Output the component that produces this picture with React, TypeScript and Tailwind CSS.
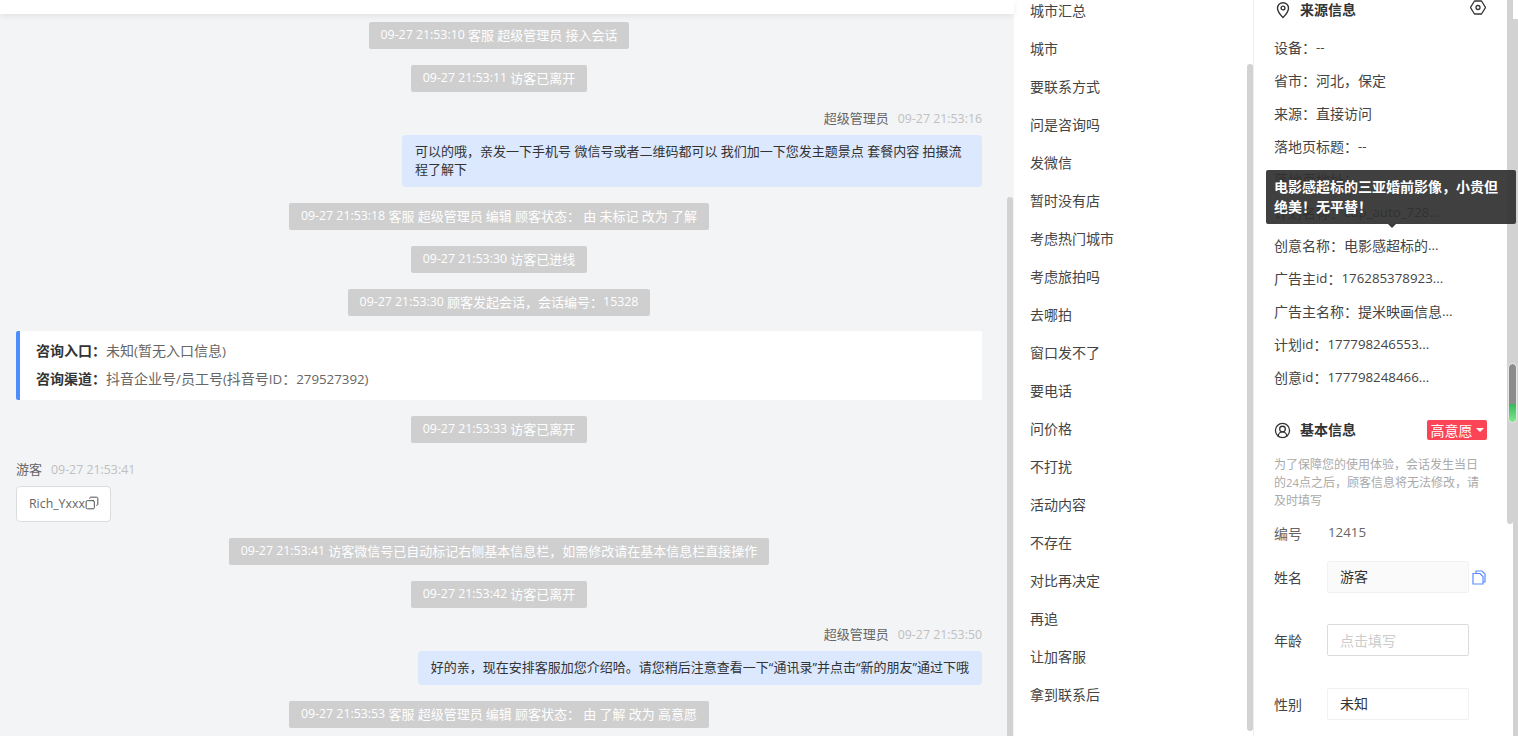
import { Copy, UserCircle2 } from "lucide-react";

const cjk = "font-['Open_Sans','Noto_Sans_CJK_SC',sans-serif]";

// latin runs sit a bit smaller than the CJK around them
function T({ text }: { text: string }) {
  return (
    <>
      {text.split(/([\x00-\x7f]+)/).map((part, i) =>
        i % 2 === 1 ? (
          <span key={i} className="text-[0.95em]">{part}</span>
        ) : (
          part
        )
      )}
    </>
  );
}

function Sys({ text }: { text: string }) {
  return (
    <div className="mb-[16px] flex justify-center">
      <div className="flex h-[27px] items-center whitespace-pre rounded-[2px] bg-[#cfcfcf] px-[12px] text-[13px] text-white">
        <T text={text} />
      </div>
    </div>
  );
}

function Sender({ name, time, right }: { name: string; time: string; right?: boolean }) {
  return (
    <div className={`mb-[7px] flex h-[20px] items-center gap-[9px] pt-[1px] text-[13px] ${right ? "justify-end" : ""}`}>
      <span className="text-[#666666]">{name}</span>
      <span className="text-[#c0c0c0]"><T text={time} /></span>
    </div>
  );
}

const phrases = [
  "城市", "要联系方式", "问是咨询吗", "发微信", "暂时没有店", "考虑热门城市", "考虑旅拍吗", "去哪拍", "窗口发不了",
  "要电话", "问价格", "不打扰", "活动内容", "不存在", "对比再决定", "再追", "让加客服", "拿到联系后",
];

const sourceRows = [
  "设备：--", "省市：河北，保定", "来源：直接访问", "落地页标题：--", "落地页地址：", "计划名称：cdp_auto_728...",
  "创意名称：电影感超标的...", "广告主id：176285378923...", "广告主名称：提米映画信息...", "计划id：177798246553...", "创意id：177798248466...",
];

export default function App() {
  return (
    <div className={`relative flex h-[736px] w-[1518px] overflow-hidden bg-white ${cjk}`}>
      {/* chat */}
      <div className="flex w-[1014px] shrink-0 flex-col bg-[#f3f4f6]">
        <div className="h-[14px] shrink-0 bg-white shadow-[0_2px_6px_rgba(0,0,0,0.08)]" />
        <div className="flex min-h-0 flex-1">
          <div className="w-[1007px] shrink-0 pl-[16px] pr-[25px] pt-[8px]">
            <Sys text="09-27 21:53:10 客服 超级管理员 接入会话" />
            <Sys text="09-27 21:53:11 访客已离开" />
            <Sender name="超级管理员" time="09-27 21:53:16" right />
            <div className="mb-[16px] flex justify-end">
              <div className="w-[580px] rounded-[4px] bg-[#dbe8fe] px-[13px] pb-[9px] pt-[7px] text-[13px] leading-[18px] text-[#333333]">
                可以的哦，亲发一下手机号 微信号或者二维码都可以 我们加一下您发主题景点 套餐内容 拍摄流程了解下
              </div>
            </div>
            <Sys text="09-27 21:53:18 客服 超级管理员 编辑 顾客状态： 由 未标记 改为 了解" />
            <Sys text="09-27 21:53:30 访客已进线" />
            <div className="-mb-[1px]">
              <Sys text="09-27 21:53:30 顾客发起会话，会话编号：15328" />
            </div>
            <div className="mb-[16px] h-[69px] rounded-[2px] border-l-[4px] border-[#4c8dfb] bg-white pl-[16px] pt-[6px] text-[14px] leading-[28px] text-[#666666]">
              <div><b className="font-bold text-[#333333]">咨询入口：</b><T text="未知(暂无入口信息)" /></div>
              <div><b className="font-bold text-[#333333]">咨询渠道：</b><T text="抖音企业号/员工号(抖音号ID：279527392)" /></div>
            </div>
            <Sys text="09-27 21:53:33 访客已离开" />
            <Sender name="游客" time="09-27 21:53:41" />
            <div className="mb-[16px] flex h-[36px] w-[95px] items-center rounded-[4px] border border-[#dcdcdc] bg-white pl-[12px] text-[13px] text-[#666666]">
              <T text="Rich_Yxxx" />
              <Copy size={14} strokeWidth={1.6} className="-mt-[2px] -scale-x-100 text-[#444444]" />
            </div>
            <Sys text="09-27 21:53:41 访客微信号已自动标记右侧基本信息栏，如需修改请在基本信息栏直接操作" />
            <Sys text="09-27 21:53:42 访客已离开" />
            <Sender name="超级管理员" time="09-27 21:53:50" right />
            <div className="mb-[16px] flex justify-end">
              <div className="flex h-[34px] items-center rounded-[4px] bg-[#dbe8fe] px-[13px] text-[13px] text-[#333333]">
                好的亲，现在安排客服加您介绍哈。请您稍后注意查看一下“通讯录”并点击“新的朋友”通过下哦
              </div>
            </div>
            <Sys text="09-27 21:53:53 客服 超级管理员 编辑 顾客状态： 由 了解 改为 高意愿" />
          </div>
          <div className="w-[6px] shrink-0 pt-[183px]">
            <div className="h-full rounded-t-[3px] bg-[#d2d2d2]" />
          </div>
        </div>
      </div>

      {/* phrases */}
      <div className="flex w-[240px] shrink-0 border-r border-[#eeeeee]">
        <div className="w-[233px] shrink-0 pl-[16px] text-[14px] text-[#444444]">
          <div className="flex h-[29px] items-center pb-[8px]">城市汇总</div>
          {phrases.map((p, i) => (
            <div key={i} className="flex h-[38px] items-center">{p}</div>
          ))}
        </div>
        <div className="w-[6px] shrink-0 pt-[64px]">
          <div className="h-[667px] rounded-[3px] bg-[#d2d2d2]" />
        </div>
      </div>

      {/* info */}
      <div className="flex w-[253px] shrink-0 flex-col pl-[20px] pr-[19px] text-[14px] text-[#444444]">
        <div className="mb-[11px] flex h-[20px] shrink-0 items-center">
          <svg width="16" height="18" viewBox="0 0 16 18" fill="none" stroke="#333333" strokeWidth="1.4" className="ml-[1px] mr-[9px]">
            <path d="M8 16.5C5 13.5 2.5 10.5 2.5 7.2a5.5 5.5 0 0 1 11 0C13.5 10.5 11 13.5 8 16.5Z" />
            <circle cx="8" cy="7" r="1.9" />
          </svg>
          <span className="-mt-[2px] font-bold text-[#333333]">来源信息</span>
          <svg width="16" height="15" viewBox="0 0 16 15" fill="none" stroke="#333333" strokeWidth="1.3" className="ml-auto mr-[2px] mt-[-5px]">
            <path d="M4.5 1h7l4 6.5-4 6.5h-7L.5 7.5Z" strokeLinejoin="round" />
            <circle cx="8" cy="7.5" r="2" />
          </svg>
        </div>
        {sourceRows.map((r, i) => (
          <div key={i} className="flex h-[33px] shrink-0 items-center whitespace-pre"><T text={r} /></div>
        ))}
        <div className="mt-[25px] flex h-[22px] shrink-0 items-center">
          <UserCircle2 size={17} strokeWidth={1.8} className="mr-[9px] text-[#333333]" />
          <span className="-mt-[2px] font-bold text-[#333333]">基本信息</span>
          <div className="ml-auto mr-[1px] flex h-[20px] w-[60px] items-center justify-center gap-[3px] rounded-[2px] bg-[#fb4455] text-white">
            高意愿
            <span className="h-0 w-0 border-x-[4px] border-t-[4px] border-x-transparent border-t-white" />
          </div>
        </div>
        <p className="mt-[15px] text-[12px] leading-[18px] text-[#aaaaaa]"><T text="为了保障您的使用体验，会话发生当日的24点之后，顾客信息将无法修改，请及时填写" /></p>
        <div className="mt-[11px] flex h-[24px] shrink-0 items-center text-[#666666]">
          <span className="w-[54px]">编号</span><T text="12415" />
        </div>
        <div className="mt-[16px] flex h-[32px] shrink-0 items-center">
          <span className="w-[53px]">姓名</span>
          <div className="flex h-[32px] w-[142px] items-center rounded-[2px] border border-[#f2f2f2] bg-[#fafafa] pb-[2px] pl-[12px] text-[#333333]">游客</div>
          <svg width="14" height="15" viewBox="0 0 14 15" fill="none" stroke="#5b8cff" strokeWidth="1.2" className="ml-[3px]">
            <path d="M1 3.5h7l3 3V14H1Z" />
            <path d="M4 3.5V1h6l3 3v8h-2" />
          </svg>
        </div>
        <div className="mt-[31px] flex h-[32px] shrink-0 items-center">
          <span className="w-[53px]">年龄</span>
          <div className="flex h-[32px] w-[142px] items-center rounded-[2px] border border-[#dcdcdc] pl-[12px] text-[#cccccc]">点击填写</div>
        </div>
        <div className="mt-[32px] flex h-[32px] shrink-0 items-center">
          <span className="w-[53px]">性别</span>
          <div className="flex h-[32px] w-[142px] items-center rounded-[2px] border border-[#f2f2f2] pb-[2px] pl-[12px] text-[#333333]">未知</div>
        </div>
      </div>

      {/* two nested scrollbars on the right */}
      <div className="w-[6px] shrink-0">
        <div className="h-[524px] rounded-b-[3px] bg-[#d2d2d2]" />
      </div>
      <div className="w-[5px] shrink-0 pt-[19px]">
        <div className="h-full bg-[#d2d2d2]" />
      </div>

      {/* page scrollbar thumb */}
      <div className="absolute left-[1509px] top-[364px] flex h-[58px] w-[7px] flex-col overflow-hidden rounded-[4px] outline outline-1 outline-[#e6e6e6]">
        <div className="h-[40px] bg-[#8c8c8c]" />
        <div className="flex-1 bg-gradient-to-b from-[#35b95a] to-[#7ce88d]" />
      </div>

      {/* tooltip */}
      <div className="absolute left-[1266px] top-[170px] w-[250px] rounded-[2px] bg-[rgba(48,48,48,0.92)] px-[8px] pb-[7px] pt-[7px] text-[14px] font-bold leading-[20px] text-white">
        电影感超标的三亚婚前影像，小贵但绝美！无平替！
        <span className="absolute left-[122px] top-full h-0 w-0 border-x-[4px] border-t-[4px] border-x-transparent border-t-[#3a3a3a]" />
      </div>
    </div>
  );
}
